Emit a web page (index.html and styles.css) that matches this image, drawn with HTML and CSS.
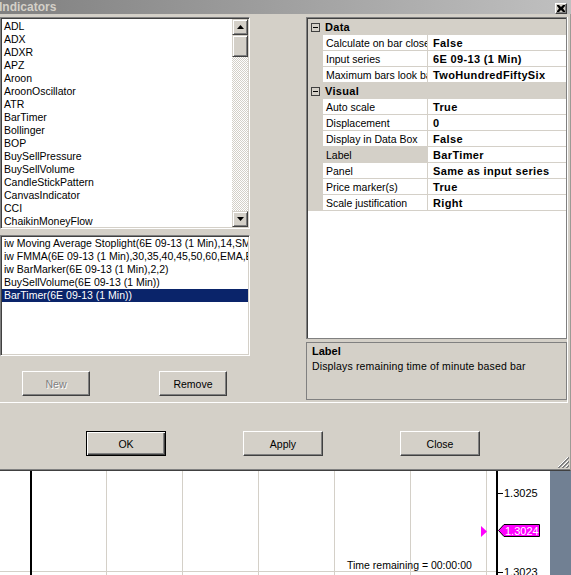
FILE: index.html
```html
<!DOCTYPE html>
<html>
<head>
<meta charset="utf-8">
<title>Indicators</title>
<link rel="stylesheet" href="styles.css">
</head>
<body>
<div class="window">
  <div class="titlebar">
    <span class="title">Indicators</span>
    <span class="capbtn"><svg width="8" height="7" viewBox="0 0 8 7"><path d="M0 0h2l2 2 2-2h2v1L6 3.5 8 6v1H6L4 5 2 7H0V6l2-2.5L0 1z" fill="#000"/></svg></span>
  </div>
  <div class="client">
    <div class="panel">
      <div class="leftcol">
        <div class="listbox list1">
          <ul class="items">
            <li>ADL</li><li>ADX</li><li>ADXR</li><li>APZ</li><li>Aroon</li><li>AroonOscillator</li><li>ATR</li><li>BarTimer</li><li>Bollinger</li><li>BOP</li><li>BuySellPressure</li><li>BuySellVolume</li><li>CandleStickPattern</li><li>CanvasIndicator</li><li>CCI</li><li>ChaikinMoneyFlow</li>
          </ul>
          <div class="vscroll">
            <div class="sbtn"><svg width="7" height="4" viewBox="0 0 7 4"><path d="M3.5 0L7 4H0z" fill="#000"/></svg></div>
            <div class="sbtn thumb"></div>
            <div class="track"></div>
            <div class="sbtn"><svg width="7" height="4" viewBox="0 0 7 4"><path d="M0 0h7L3.5 4z" fill="#000"/></svg></div>
          </div>
        </div>
        <div class="listbox list2">
          <ul class="items">
            <li>iw Moving Average Stoplight(6E 09-13 (1 Min),14,SMA)</li>
            <li>iw FMMA(6E 09-13 (1 Min),30,35,40,45,50,60,EMA,EMA)</li>
            <li>iw BarMarker(6E 09-13 (1 Min),2,2)</li>
            <li>BuySellVolume(6E 09-13 (1 Min))</li>
            <li class="selected">BarTimer(6E 09-13 (1 Min))</li>
          </ul>
        </div>
        <div class="btnrow">
          <button class="btn disabled">New</button>
          <button class="btn">Remove</button>
        </div>
      </div>
      <div class="rightcol">
        <div class="grid">
          <div class="cat"><span class="exp"><svg width="5" height="1" viewBox="0 0 5 1"><rect width="5" height="1" fill="#000"/></svg></span><span class="catname">Data</span></div>
          <div class="prop"><span class="pname">Calculate on bar close</span><span class="pval">False</span></div>
          <div class="prop"><span class="pname">Input series</span><span class="pval">6E 09-13 (1 Min)</span></div>
          <div class="prop"><span class="pname">Maximum bars look back</span><span class="pval">TwoHundredFiftySix</span></div>
          <div class="cat"><span class="exp"><svg width="5" height="1" viewBox="0 0 5 1"><rect width="5" height="1" fill="#000"/></svg></span><span class="catname">Visual</span></div>
          <div class="prop"><span class="pname">Auto scale</span><span class="pval">True</span></div>
          <div class="prop"><span class="pname">Displacement</span><span class="pval">0</span></div>
          <div class="prop"><span class="pname">Display in Data Box</span><span class="pval">False</span></div>
          <div class="prop sel"><span class="pname">Label</span><span class="pval">BarTimer</span></div>
          <div class="prop"><span class="pname">Panel</span><span class="pval">Same as input series</span></div>
          <div class="prop"><span class="pname">Price marker(s)</span><span class="pval">True</span></div>
          <div class="prop"><span class="pname">Scale justification</span><span class="pval">Right</span></div>
        </div>
        <div class="desc">
          <div class="desctitle">Label</div>
          <div class="desctext">Displays remaining time of minute based bar</div>
        </div>
      </div>
    </div>
    <div class="actions">
      <button class="btn default">OK</button>
      <button class="btn">Apply</button>
      <button class="btn">Close</button>
    </div>
    <svg class="grip" width="12" height="12" viewBox="0 0 12 12">
      <path d="M11 1L1 11M11 5L5 11M11 9L9 11" stroke="#fff" stroke-width="1"/>
      <path d="M12 1L1 12M12 2L2 12M12 5L5 12M12 6L6 12M12 9L9 12M12 10L10 12" stroke="#808080" stroke-width="1"/>
    </svg>
  </div>
</div>
<div class="chart">
  <svg width="571" height="104" viewBox="0 0 571 104">
    <rect x="0" y="0" width="571" height="104" fill="#fff"/>
    <rect x="106" y="0" width="1" height="104" fill="#d4d0c8"/>
    <rect x="182" y="0" width="1" height="104" fill="#d4d0c8"/>
    <rect x="258" y="0" width="1" height="104" fill="#d4d0c8"/>
    <rect x="334" y="0" width="1" height="104" fill="#d4d0c8"/>
    <rect x="410" y="0" width="1" height="104" fill="#d4d0c8"/>
    <rect x="486" y="0" width="1" height="104" fill="#d4d0c8"/>
    <rect x="0" y="100" width="496" height="1" fill="#d4d0c8"/>
    <rect x="30" y="0" width="2" height="104" fill="#000"/>
    <rect x="496" y="0" width="2" height="104" fill="#000"/>
    <rect x="498" y="22" width="5" height="1" fill="#000"/>
    <text class="axis" x="504" y="26">1.3025</text>
    <rect x="498" y="101" width="5" height="1" fill="#000"/>
    <text class="axis" x="504" y="105">1.3023</text>
    <path d="M481 55L487 60.5L481 66z" fill="#ff00ff"/>
    <path d="M498.5 59.5L504 53.5H539.5V65.5H504z" fill="#ff00ff" stroke="#000" stroke-width="1"/>
    <text class="axis label" x="505" y="64">1.3024</text>
    <text class="timer" x="347" y="98">Time remaining = 00:00:00</text>
    <rect x="550" y="0" width="21" height="104" fill="#718093"/>
  </svg>
</div>
</body>
</html>
```

FILE: styles.css
```css
* {
  box-sizing: border-box;
  margin: 0;
  padding: 0;
}

html, body {
  width: 571px;
  height: 575px;
  overflow: hidden;
}

body {
  background: #fff;
  font-family: "Liberation Sans", Arial, sans-serif;
  font-size: 10.5px;
  color: #000;
}

.window {
  width: 571px;
  height: 471px;
  display: flex;
  flex-direction: column;
  background: #d4d0c8;
}

.titlebar {
  height: 14px;
  flex: none;
  display: flex;
  align-items: center;
  justify-content: space-between;
  background: linear-gradient(to right, #808080, #c0c0c0);
}

.title {
  margin-left: -1px;
  font-weight: bold;
  font-size: 12px;
  color: #d4d0c8;
  line-height: 14px;
}

.capbtn {
  width: 12px;
  height: 11px;
  margin-right: 4px;
  margin-top: 2px;
  display: flex;
  align-items: center;
  justify-content: center;
  background: #d4d0c8;
  border: 1px solid;
  border-color: #fff #404040 #404040 #fff;
  box-shadow: inset -1px -1px #808080;
}

.client {
  flex: 1;
  position: relative;
  padding-top: 3px;
  background: #d4d0c8;
  border-right: 1px solid #9c9a95;
  border-bottom: 1px solid #404040;
  box-shadow: inset 0 -1px #808080;
}

.panel {
  width: 568px;
  height: 386px;
  display: flex;
  align-items: flex-start;
  border-right: 1px solid #fff;
  border-bottom: 1px solid #fff;
}

.leftcol {
  width: 250px;
  flex: none;
  display: flex;
  flex-direction: column;
}

.listbox {
  background: #fff;
  border: 1px solid;
  border-color: #808080 #fff #fff #808080;
  box-shadow: inset 1px 1px #404040, inset -1px -1px #d4d0c8;
  padding: 1px;
  overflow: hidden;
}

.list1 {
  height: 212px;
  display: flex;
}

.list2 {
  height: 121px;
  margin-top: 6px;
}

.items {
  list-style: none;
  flex: 1;
  min-width: 0;
  overflow: hidden;
}

.list1 .items {
  padding-top: 1px;
}

.items li {
  height: 13px;
  line-height: 13px;
  padding-left: 2px;
  white-space: nowrap;
  overflow: hidden;
}

.items li.selected {
  background: #0a246a;
  color: #fff;
}

.vscroll {
  width: 16px;
  flex: none;
  display: flex;
  flex-direction: column;
}

.sbtn {
  width: 16px;
  height: 16px;
  flex: none;
  display: flex;
  align-items: center;
  justify-content: center;
  background: #d4d0c8;
  border: 1px solid;
  border-color: #d4d0c8 #404040 #404040 #d4d0c8;
  box-shadow: inset 1px 1px #fff, inset -1px -1px #808080;
}

.sbtn.thumb {
  height: 22px;
}

.track {
  flex: 1;
  background: repeating-conic-gradient(#d4d0c8 0 25%, #fff 0 50%) 0 0 / 2px 2px;
}

.btnrow {
  height: 25px;
  margin-top: 15px;
  padding-left: 22px;
  display: flex;
  gap: 69px;
}

.btnrow .btn {
  width: 68px;
}

.btn {
  width: 80px;
  height: 25px;
  background: #d4d0c8;
  border: 1px solid;
  border-color: #fff #404040 #404040 #fff;
  box-shadow: inset -1px -1px #808080;
  font-family: "Liberation Sans", Arial, sans-serif;
  font-size: 10.5px;
  color: #000;
}

.btn.disabled {
  color: #808080;
  text-shadow: 1px 1px #fff;
}

.btn.default {
  border-color: #000;
  box-shadow: inset 1px 1px #fff, inset -1px -1px #404040, inset -2px -2px #808080;
}

.rightcol {
  width: 261px;
  margin-left: 56px;
  flex: none;
  display: flex;
  flex-direction: column;
}

.grid {
  height: 322px;
  background: #fff;
  border: 1px solid #808080;
  box-shadow: inset 1px 1px #404040;
  padding: 1px 0 0 1px;
}

.cat {
  height: 16px;
  display: flex;
  align-items: center;
  background: #d4d0c8;
}

.exp {
  width: 9px;
  height: 9px;
  margin-left: 3px;
  display: flex;
  align-items: center;
  justify-content: center;
  border: 1px solid #404040;
  background: #d4d0c8;
}

.catname {
  margin-left: 5px;
  font-weight: bold;
  font-size: 11px;
  letter-spacing: 0.3px;
}

.prop {
  height: 16px;
  display: flex;
  padding-left: 15px;
  background: #d4d0c8;
}

.pname {
  width: 105px;
  flex: none;
  padding-left: 3px;
  line-height: 16px;
  background: #fff;
  border-right: 1px solid #d4d0c8;
  border-bottom: 1px solid #d4d0c8;
  white-space: nowrap;
  overflow: hidden;
}

.prop.sel .pname {
  background: #d4d0c8;
}

.pval {
  flex: 1;
  padding-left: 5px;
  line-height: 16px;
  background: #fff;
  border-bottom: 1px solid #d4d0c8;
  font-weight: bold;
  font-size: 11px;
  letter-spacing: 0.35px;
  white-space: nowrap;
  overflow: hidden;
}

.desc {
  height: 58px;
  margin-top: 3px;
  padding: 1px 5px 0;
  border: 1px solid #808080;
  line-height: 15px;
}

.desctitle {
  font-weight: bold;
  font-size: 11px;
}

.desctext {
  letter-spacing: 0.15px;
}

.actions {
  margin-top: 28px;
  padding-left: 86px;
  display: flex;
  gap: 77px;
}

.grip {
  position: absolute;
  right: 1px;
  bottom: 2px;
}

.chart {
  height: 104px;
  display: block;
}

.chart svg {
  display: block;
}

.axis {
  font-family: "Liberation Sans", Arial, sans-serif;
  font-size: 11px;
  fill: #000;
}

.axis.label {
  fill: #fff;
}

.timer {
  font-family: "Liberation Sans", Arial, sans-serif;
  font-size: 10.5px;
  fill: #000;
}
```
